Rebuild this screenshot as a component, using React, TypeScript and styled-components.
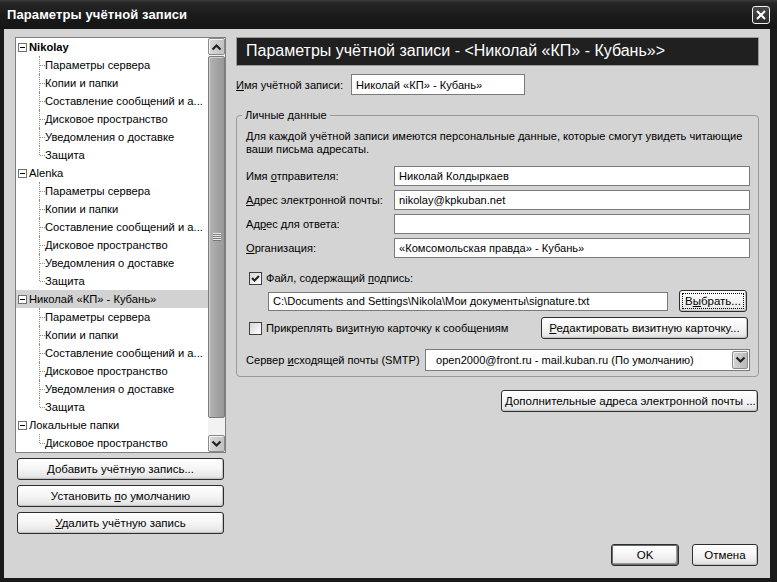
import React from 'react'
import styled, { createGlobalStyle } from 'styled-components'

const GlobalStyle = createGlobalStyle`
    html, body {
        margin: 0;
        padding: 0;
        background: #1a1a1a;
    }

    body {
        font-family: 'Liberation Sans', Arial, sans-serif;
        font-size: 11.1px;
        color: #000;
    }

    * {
        box-sizing: border-box;
    }
`

type Account = {
    name: string
    bold?: boolean
    selected?: boolean
    children: string[]
}

const accountPages = [
    'Параметры сервера',
    'Копии и папки',
    'Составление сообщений и а...',
    'Дисковое пространство',
    'Уведомления о доставке',
    'Защита',
]

const accounts: Account[] = [
    { name: 'Nikolay', bold: true, children: accountPages },
    { name: 'Alenka', children: accountPages },
    { name: 'Николай «КП» - Кубань»', selected: true, children: accountPages },
    { name: 'Локальные папки', children: ['Дисковое пространство'] },
]

const Chevron = ({ up }: { up?: boolean }) => (
    <svg width="11" height="8" viewBox="0 0 11 8">
        <polyline
            points={up ? '1.5,6.5 5.5,2.5 9.5,6.5' : '1.5,1.5 5.5,5.5 9.5,1.5'}
            fill="none"
            stroke="#222"
            strokeWidth="2.2"
        />
    </svg>
)

export default function App() {
    return (
        <Window>
            <GlobalStyle />
            <TitleBar>
                <span>Параметры учётной записи</span>
                <CloseButton>
                    <svg width="16" height="16" viewBox="0 0 16 16">
                        <path d="M4 4 L12 12 M12 4 L4 12" stroke="#fff" strokeWidth="2" />
                    </svg>
                </CloseButton>
            </TitleBar>

            <Body>
                <LeftColumn>
                    <Tree>
                        <TreeList>
                            {accounts.map(account => (
                                <div key={account.name}>
                                    <TreeRow $selected={account.selected}>
                                        <Expander>
                                            <svg width="7" height="7" viewBox="0 0 7 7">
                                                <path d="M1 3.5 H6" stroke="#000" strokeWidth="1" />
                                            </svg>
                                        </Expander>
                                        <NodeLabel $bold={account.bold}>{account.name}</NodeLabel>
                                    </TreeRow>
                                    {account.children.map((child, i) => (
                                        <TreeRow key={child + i}>
                                            <Connector $last={i === account.children.length - 1} />
                                            <NodeLabel>{child}</NodeLabel>
                                        </TreeRow>
                                    ))}
                                </div>
                            ))}
                        </TreeList>
                        <ScrollBar>
                            <ScrollButton>
                                <Chevron up />
                            </ScrollButton>
                            <Thumb>
                                <svg width="8" height="8" viewBox="0 0 8 8">
                                    <path d="M0 0.5 H8 M0 2.5 H8 M0 4.5 H8 M0 6.5 H8" stroke="#eee" />
                                    <path d="M0 1.5 H8 M0 3.5 H8 M0 5.5 H8 M0 7.5 H8" stroke="#777" />
                                </svg>
                            </Thumb>
                            <ScrollButton>
                                <Chevron />
                            </ScrollButton>
                        </ScrollBar>
                    </Tree>

                    <SideButton>
                        <u>Д</u>обавить учётную запись...
                    </SideButton>
                    <SideButton>
                        Установить <u>п</u>о умолчанию
                    </SideButton>
                    <SideButton>
                        <u>У</u>далить учётную запись
                    </SideButton>
                </LeftColumn>

                <RightColumn>
                    <PageHeader>Параметры учётной записи - &lt;Николай «КП» - Кубань»&gt;</PageHeader>

                    <AccountRow>
                        <AccountLabel>
                            <u>И</u>мя учётной записи:
                        </AccountLabel>
                        <TextField $width={174} $height={21}>
                            Николай «КП» - Кубань»
                        </TextField>
                    </AccountRow>

                    <GroupBox>
                        <Legend>Личные данные</Legend>
                        <Description>
                            Для каждой учётной записи имеются персональные данные, которые смогут увидеть читающие
                            ваши письма адресаты.
                        </Description>

                        <FieldGrid>
                            <span>
                                Имя <u>о</u>тправителя:
                            </span>
                            <TextField>Николай Колдыркаев</TextField>
                            <span>
                                <u>А</u>дрес электронной почты:
                            </span>
                            <TextField>nikolay@kpkuban.net</TextField>
                            <span>
                                Ад<u>р</u>ес для ответа:
                            </span>
                            <TextField />
                            <span>
                                <u>О</u>рганизация:
                            </span>
                            <TextField>«Комсомольская правда» - Кубань»</TextField>
                        </FieldGrid>

                        <CheckRow>
                            <CheckBox>
                                <svg width="11" height="11" viewBox="0 0 11 11">
                                    <polyline points="2,5 4.5,7.5 9,3" fill="none" stroke="#222" strokeWidth="2" />
                                </svg>
                            </CheckBox>
                            <span>
                                Файл, содержащий <u>п</u>одпись:
                            </span>
                        </CheckRow>

                        <PathRow>
                            <TextField $width={400} $height={19}>
                                C:\Documents and Settings\Nikola\Мои документы\signature.txt
                            </TextField>
                            <Button $focused $width={68}>
                                В<u>ы</u>брать...
                            </Button>
                        </PathRow>

                        <CardRow>
                            <CheckRow as="div">
                                <CheckBox />
                                <span>
                                    Прикреплять ви<u>з</u>итную карточку к сообщениям
                                </span>
                            </CheckRow>
                            <Button $width={207}>
                                <u>Р</u>едактировать визитную карточку...
                            </Button>
                        </CardRow>

                        <SmtpRow>
                            <span>
                                Сервер <u>и</u>сходящей почты (SMTP)
                            </span>
                            <Select>
                                <span>open2000@front.ru - mail.kuban.ru (По умолчанию)</span>
                                <SelectArrow>
                                    <Chevron />
                                </SelectArrow>
                            </Select>
                        </SmtpRow>
                    </GroupBox>

                    <ExtraButton $width={257}>
                        <u>Д</u>ополнительные адреса электронной почты ...
                    </ExtraButton>

                    <DialogButtons>
                        <Button $default $width={68}>
                            OK
                        </Button>
                        <Button $width={66}>Отмена</Button>
                    </DialogButtons>
                </RightColumn>
            </Body>
        </Window>
    )
}

const Window = styled.div`
    width: 777px;
    height: 582px;
    display: flex;
    flex-direction: column;
    background: #1a1a1a;
`

const TitleBar = styled.div`
    height: 29px;
    flex-shrink: 0;
    display: flex;
    align-items: center;
    justify-content: space-between;
    padding: 0 7px 1px 7px;
    background: linear-gradient(#3c3c3c 0, #262626 3px, #1c1c1c 14px, #141414 100%);
    color: #fff;
    font-weight: bold;
    font-size: 13px;
    letter-spacing: 0.1px;
`

const CloseButton = styled.div`
    width: 18px;
    height: 18px;
    margin-top: 1px;
    display: flex;
    align-items: center;
    justify-content: center;
    border: 1px solid #f0f0f0;
    border-radius: 3px;
    background: linear-gradient(#4a4a4a, #2a2a2a);
`

const Body = styled.div`
    flex: 1;
    margin: 0 7px 4px 4px;
    padding: 8px 11px 12px 11px;
    display: flex;
    gap: 10px;
    background: #d4d4d4;
    white-space: nowrap;
`

const LeftColumn = styled.div`
    width: 211px;
    display: flex;
    flex-direction: column;
    gap: 5px;
`

const Tree = styled.div`
    height: 416px;
    display: flex;
    border: 1px solid #7f7f7f;
    background: #fff;
`

const TreeList = styled.div`
    flex: 1;
    overflow: hidden;
`

const TreeRow = styled.div<{ $selected?: boolean }>`
    height: 18px;
    display: flex;
    align-items: center;
    padding-left: 2px;
    background: ${p => (p.$selected ? '#d2d2d2' : 'transparent')};
`

const Expander = styled.span`
    width: 9px;
    height: 9px;
    margin-right: 2px;
    display: flex;
    align-items: center;
    justify-content: center;
    border: 1px solid #6f6f6f;
    background: #fff;
`

const NodeLabel = styled.span<{ $bold?: boolean }>`
    font-weight: ${p => (p.$bold ? 'bold' : 'normal')};
    font-size: 11.2px;
`

const Connector = styled.span<{ $last?: boolean }>`
    position: relative;
    align-self: stretch;
    width: 6px;
    margin-left: 21px;

    &::before {
        content: '';
        position: absolute;
        left: 0;
        top: 0;
        height: ${p => (p.$last ? '9px' : '18px')};
        border-left: 1px dotted #8a8a8a;
    }

    &::after {
        content: '';
        position: absolute;
        left: 1px;
        right: 0;
        top: 9px;
        border-top: 1px dotted #8a8a8a;
    }
`

const ScrollBar = styled.div`
    width: 17px;
    display: flex;
    flex-direction: column;
    background: #f2f2f2;
`

const ScrollButton = styled.div`
    height: 17px;
    display: flex;
    align-items: center;
    justify-content: center;
    border: 1px solid #8a8a8a;
    border-radius: 2px;
    background: linear-gradient(90deg, #d8d8d8, #c2c2c2);
    box-shadow: inset 1px 1px 0 #f4f4f4;

    &:last-child {
        margin-top: auto;
    }
`

const Thumb = styled.div`
    height: 362px;
    margin-top: 1px;
    display: flex;
    align-items: center;
    justify-content: center;
    border: 1px solid #7c7c7c;
    border-radius: 2px;
    background: linear-gradient(90deg, #b4b4b4, #a2a2a2 60%, #989898);
    box-shadow: inset 1px 1px 0 #cfcfcf;
`

const Button = styled.button<{ $default?: boolean; $focused?: boolean; $width?: number }>`
    position: relative;
    width: ${p => (p.$width ? `${p.$width}px` : 'auto')};
    height: 22px;
    padding: 0 3px;
    flex-shrink: 0;
    font: inherit;
    font-size: 11.5px;
    color: #000;
    white-space: nowrap;
    border: 1px solid #2e2e2e;
    border-radius: 3px;
    background: linear-gradient(#ffffff, #f6f6f6 45%, #e8e8e8 85%, #d6d6d6);
    box-shadow: ${p =>
        p.$default ? 'inset 0 0 0 1px #6a6a6a, inset -2px -2px 0 #9a9a9a' : 'inset -1px -1px 0 #c2c2c2'};

    &::after {
        content: '';
        display: ${p => (p.$focused ? 'block' : 'none')};
        position: absolute;
        inset: 2px;
        border: 1px dotted #000;
    }
`

const SideButton = styled(Button)`
    margin: 0 2px;
`

const RightColumn = styled.div`
    flex: 1;
    display: flex;
    flex-direction: column;
`

const PageHeader = styled.div`
    height: 29px;
    display: flex;
    align-items: center;
    padding: 0 0 1px 9px;
    border: 1px solid #9a9a9a;
    background: #202020;
    color: #fff;
    font-size: 16px;
`

const AccountRow = styled.div`
    margin-top: 8px;
    display: flex;
    align-items: center;
`

const AccountLabel = styled.span`
    width: 115px;
`

const TextField = styled.div<{ $width?: number; $height?: number }>`
    width: ${p => (p.$width ? `${p.$width}px` : '100%')};
    height: ${p => p.$height ?? 20}px;
    display: flex;
    align-items: center;
    padding: 0 0 0 4px;
    border: 1px solid #7a7a7a;
    background: #fff;
    overflow: hidden;
`

const GroupBox = styled.fieldset`
    margin: 13px 0 0;
    padding: 0 8px 5px 9px;
    min-width: 0;
    border: 1px solid #9a9a9a;
    border-radius: 4px;
`

const Legend = styled.legend`
    margin-left: -4px;
    padding: 0 3px;
    line-height: 14px;
`

const Description = styled.div`
    margin-top: 8px;
    line-height: 13px;
    white-space: normal;
`

const FieldGrid = styled.div`
    margin-top: 10px;
    display: grid;
    grid-template-columns: 148px 1fr;
    row-gap: 4px;
    align-items: center;
`

const CheckRow = styled.label`
    height: 16px;
    margin-top: 12px;
    display: flex;
    align-items: center;
    gap: 4px;
`

const CheckBox = styled.span`
    width: 13px;
    height: 13px;
    margin-left: 3px;
    display: flex;
    align-items: center;
    justify-content: center;
    border: 1px solid #3f3f3f;
    background: linear-gradient(135deg, #d6d6d6, #f4f4f4 70%, #fff);
`

const PathRow = styled.div`
    margin-top: 4px;
    padding: 0 3px 0 22px;
    display: flex;
    align-items: center;
    gap: 11px;
`

const CardRow = styled.div`
    margin-top: 5px;
    padding-right: 2px;
    display: flex;
    align-items: center;
    justify-content: space-between;

    & > div {
        margin-top: 0;
    }
`

const SmtpRow = styled.div`
    margin-top: 10px;
    display: flex;
    align-items: center;
    justify-content: space-between;
`

const Select = styled.div`
    width: 325px;
    height: 22px;
    display: flex;
    align-items: center;
    justify-content: space-between;
    padding: 0 1px 0 10px;
    border: 1px solid #7a7a7a;
    background: #fff;
`

const SelectArrow = styled.span`
    width: 16px;
    height: 18px;
    display: flex;
    align-items: center;
    justify-content: center;
    border: 1px solid #8a8a8a;
    border-radius: 2px;
    background: linear-gradient(90deg, #d4d4d4, #b8b8b8);
    box-shadow: inset 1px 1px 0 #eee;
`

const ExtraButton = styled(Button)`
    margin: 13px 1px 0 0;
    align-self: flex-end;
`

const DialogButtons = styled.div`
    margin-top: auto;
    padding-right: 1px;
    display: flex;
    justify-content: flex-end;
    gap: 13px;
`
